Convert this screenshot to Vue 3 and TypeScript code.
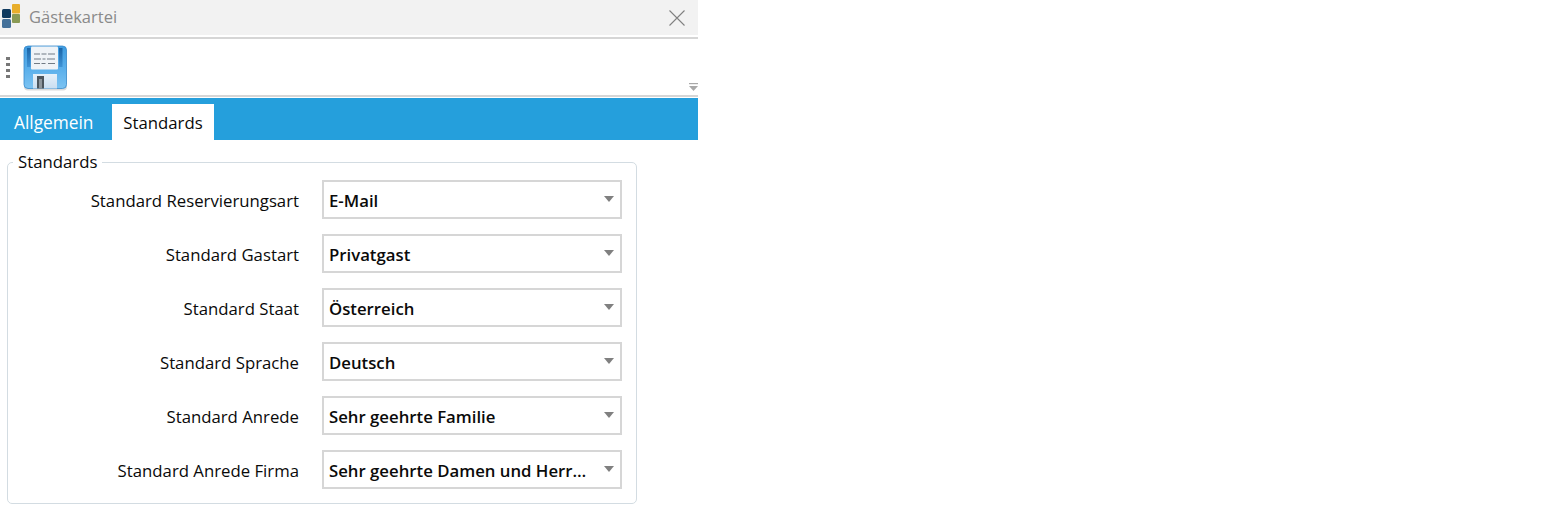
<script setup lang="ts">
const rows: { label: string; value: string }[] = [
  { label: 'Standard Reservierungsart', value: 'E-Mail' },
  { label: 'Standard Gastart', value: 'Privatgast' },
  { label: 'Standard Staat', value: 'Österreich' },
  { label: 'Standard Sprache', value: 'Deutsch' },
  { label: 'Standard Anrede', value: 'Sehr geehrte Familie' },
  { label: 'Standard Anrede Firma', value: 'Sehr geehrte Damen und Herren' },
]
</script>

<template>
  <div class="window">
    <header class="titlebar">
      <svg class="logo" width="22" height="28" viewBox="0 0 22 28">
        <rect x="2" y="9" width="9" height="9" rx="1.5" fill="#0f3a5f" />
        <rect x="2" y="19" width="9" height="9" rx="1.5" fill="#44719a" />
        <rect x="12" y="4" width="8" height="9.5" rx="1" fill="#e8ae2c" />
        <rect x="12" y="14" width="8" height="9" rx="1" fill="#8a9a55" />
      </svg>
      <span class="title">Gästekartei</span>
      <svg class="close" width="16" height="16" viewBox="0 0 16 16">
        <path d="M0.5 0.5 L15.5 15.5 M15.5 0.5 L0.5 15.5" stroke="#808080" stroke-width="1.1" fill="none" />
      </svg>
    </header>
    <div class="toolbar">
      <div class="grip"><i></i><i></i><i></i><i></i></div>
      <svg class="save" width="46" height="46" viewBox="0 0 46 46">
        <defs>
          <linearGradient id="disk" x1="0" y1="0" x2="0" y2="1">
            <stop offset="0" stop-color="#3f9ce0" />
            <stop offset="0.6" stop-color="#5fb2ec" />
            <stop offset="1" stop-color="#7cc3f2" />
          </linearGradient>
          <linearGradient id="strip" x1="0" y1="0" x2="0" y2="1">
            <stop offset="0" stop-color="#1a65a8" />
            <stop offset="1" stop-color="#3f93d6" />
          </linearGradient>
          <linearGradient id="shutter" x1="0" y1="0" x2="0" y2="1">
            <stop offset="0" stop-color="#e6f0f9" />
            <stop offset="1" stop-color="#c9def1" />
          </linearGradient>
        </defs>
        <rect x="1" y="2.5" width="43" height="43" rx="4" fill="#bdbdbd" opacity="0.55" />
        <rect x="1" y="1" width="42.5" height="42.5" rx="4" fill="url(#disk)" stroke="#3a8ccb" stroke-width="0.8" />
        <rect x="4" y="3" width="3.5" height="19" fill="url(#strip)" />
        <rect x="36" y="3" width="3.5" height="19" fill="url(#strip)" />
        <rect x="8" y="1.5" width="27" height="23" rx="1" fill="#eff3f7" />
        <path d="M11 9h6M18.500 9h5M25 9h7M11 14h7M19.500 14h3M24 14h8M11 18.500h6M18.500 18.500h4M25 18.500h7" stroke="#717b85" stroke-width="1.2" fill="none" />
        <rect x="10" y="29" width="24" height="14.500" fill="url(#shutter)" />
        <rect x="14" y="31" width="7" height="12.500" fill="#4c555d" />
        <rect x="16" y="34" width="3" height="9.500" fill="#8d959c" />
      </svg>
      <svg class="overflow" width="9" height="9" viewBox="0 0 9 9">
        <rect x="0" y="0" width="9" height="1.2" fill="#a8a8a8" />
        <path d="M0 3 H9 L4.5 8 Z" fill="#a8a8a8" />
      </svg>
    </div>
    <nav class="tabs">
      <span class="tab">Allgemein</span>
      <span class="tab active">Standards</span>
    </nav>
    <fieldset class="group">
      <legend>Standards</legend>
      <div v-for="row in rows" :key="row.label" class="row">
        <label class="label">{{ row.label }}</label>
        <div class="select">
          <span class="value">{{ row.value }}</span>
          <span class="arrow"></span>
        </div>
      </div>
    </fieldset>
  </div>
</template>

<style>
html, body { background: #fff; margin: 0; }
</style>

<style scoped>
.window {
  width: 698px;
  font-family: "Open Sans", "Noto Sans", sans-serif;
  font-size: 16.75px;
  color: #0a0a0a;
}
.titlebar {
  height: 35px;
  background: #f2f2f2;
  display: flex;
  align-items: center;
  box-sizing: border-box;
  padding: 0 13px 0 0;
}
.logo { flex: none; margin-bottom: 7px; }
.title {
  margin-left: 7px;
  margin-bottom: 2px;
  color: #8a8a8a;
  flex: 1;
  font-size: 16.5px;
}
.close { flex: none; }
.toolbar {
  margin-top: 2px;
  height: 56px;
  border-top: 2px solid #d6d6d6;
  border-bottom: 2px solid #d6d6d6;
  display: flex;
  align-items: center;
  position: relative;
  background: #fff;
}
.grip {
  margin-left: 6px;
  display: flex;
  flex-direction: column;
  gap: 3px;
  width: 4px;
}
.grip i {
  display: block;
  width: 3.5px;
  height: 3px;
  background: #777;
}
.save { margin-left: 13px; margin-top: 2px; flex: none; }
.overflow { position: absolute; right: 0; bottom: 3px; }
.tabs {
  margin-top: 1px;
  height: 42px;
  background: #259fdc;
  display: flex;
  align-items: flex-end;
  padding-left: 2px;
  box-sizing: border-box;
}
.tab {
  height: 36px;
  line-height: 38px;
  padding: 0 12px;
  color: #fff;
  width: 110px;
  box-sizing: border-box;
  font-size: 17.3px;
}
.tab.active {
  width: 102px;
  background: #fff;
  color: #0a0a0a;
  text-align: center;
  padding: 0;
  font-size: 16.75px;
}
.group {
  margin: 11px 0 0 7px;
  width: 630px;
  box-sizing: border-box;
  border: 1px solid #d3dce2;
  border-radius: 5px;
  padding: 0 14px 14px 0;
  min-width: 0;
}
.group legend {
  margin-left: 5px;
  padding: 0 5px;
  line-height: 22px;
}
.row {
  display: grid;
  grid-template-columns: 291px 300px;
  column-gap: 23px;
  align-items: center;
  height: 40px;
  margin-top: 14px;
}
.row:first-of-type { margin-top: 6px; }
.label { text-align: right; padding-top: 2px; }
.select {
  height: 39px;
  box-sizing: border-box;
  border: 2px solid #d6d6d6;
  display: flex;
  align-items: center;
  padding: 0 6px 0 5px;
  background: #fff;
  font-weight: 600;
}
.value {
  flex: 1;
  min-width: 0;
  overflow: hidden;
  white-space: nowrap;
  text-overflow: ellipsis;
  padding-right: 16px;
  padding-top: 2px;
}
.arrow {
  flex: none;
  width: 0;
  height: 0;
  border-left: 5px solid transparent;
  border-right: 5px solid transparent;
  border-top: 6px solid #808080;
  margin-top: -1px;
}
</style>
